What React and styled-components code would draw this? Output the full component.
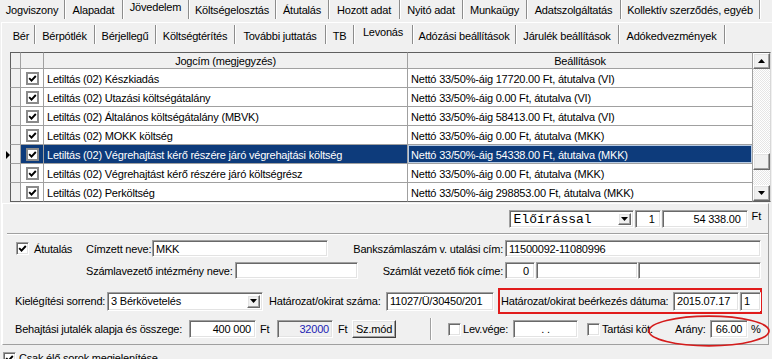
import React from "react";
import styled, { createGlobalStyle } from "styled-components";

const GlobalStyle = createGlobalStyle`
  html, body { margin: 0; padding: 0; background: #f0f0f0; }
  body {
    font-family: "Liberation Sans", Arial, sans-serif;
    font-size: 11px;
    letter-spacing: -0.2px;
    color: #000;
  }
  * { box-sizing: border-box; }
`;

const Window = styled.div`
  width: 772px;
  height: 359px;
  overflow: hidden;
  background: #f0f0f0;
`;

const TabStrip = styled.div`
  display: flex;
  height: 19px;
  padding-left: ${({ $pl }) => $pl || 0}px;
`;

const Tab = styled.div`
  flex: none;
  width: ${({ $w }) => $w}px;
  height: 19px;
  display: flex;
  align-items: center;
  justify-content: center;
  white-space: nowrap;
  padding-bottom: ${({ $active }) => ($active ? 6 : 0)}px;
  padding-top: ${({ $low }) => ($low ? 2 : 0)}px;
  border-right: 1px solid #8c8c8c;
  box-shadow: 1px 0 0 #fff;
`;

const SubPage = styled.div`
  margin-top: 3px;
  margin-left: 1px;
  border-top: 1px solid #fff;
  border-left: 1px solid #fff;
  padding-top: 2px;
`;

const Content = styled.div`
  padding-top: 8px;
`;

/* ---------- grid ---------- */

const GridWrap = styled.div`
  display: flex;
  height: 150px;
`;

const Table = styled.div`
  display: flex;
  flex-direction: column;
`;

const GridLine = styled.div`
  display: grid;
  grid-template-columns: 8px 11px 23px 364px 345px;
  height: ${({ $head }) => ($head ? 17 : 19)}px;
`;

const Gutter = styled.div`
  display: flex;
  align-items: center;
  justify-content: flex-end;
`;

const Pointer = styled.span`
  width: 0;
  height: 0;
  border-left: 4px solid #000;
  border-top: 4px solid transparent;
  border-bottom: 4px solid transparent;
`;

const Cell = styled.div`
  display: flex;
  align-items: center;
  justify-content: ${({ $center }) => ($center ? "center" : "flex-start")};
  padding: ${({ $head }) => ($head ? "0 3px" : "1px 3px 0")};
  white-space: nowrap;
  overflow: hidden;
  background: ${({ $sel, $fixed, $head }) =>
    $sel ? "#0d3b7b" : $fixed || $head ? "#f0f0f0" : "#fff"};
  color: ${({ $sel }) => ($sel ? "#fff" : "#000")};
  border-right: 1px solid #a0a0a0;
  border-bottom: 1px solid ${({ $last }) => ($last ? "#5f5f5f" : "#a0a0a0")};
  border-top: ${({ $head }) => ($head ? "1px solid #5f5f5f" : "none")};
  border-left: ${({ $fixed }) => ($fixed ? "1px solid #5f5f5f" : "none")};
  box-shadow: ${({ $focus }) => ($focus ? "inset 0 0 0 1px #b7cbe4" : "none")};
`;

const ScrollBar = styled.div`
  width: 18px;
  height: 150px;
  display: flex;
  flex-direction: column;
  border-top: 1px solid #5f5f5f;
  border-bottom: 1px solid #5f5f5f;
  border-right: 1px solid #d8d8d8;
`;

const Raised = styled.div`
  background: #f0f0f0;
  border: 1px solid;
  border-color: #fff #696969 #696969 #fff;
  box-shadow: inset -1px -1px #a0a0a0, inset 1px 1px #e3e3e3;
  display: flex;
  align-items: center;
  justify-content: center;
`;

const ScrollBtn = styled(Raised)`
  height: 16px;
  flex: none;
`;

const Track = styled.div`
  flex: 1;
  background: repeating-conic-gradient(#fff 0 25%, #e6e6e6 0 50%) 0 0 / 2px 2px;
`;

const Thumb = styled(Raised)`
  height: 17px;
`;

const Arrow = ({ up }) => (
  <svg width="7" height="4" viewBox="0 0 7 4">
    <polygon points={up ? "0,4 7,4 3.5,0" : "0,0 7,0 3.5,4"} fill="#000" />
  </svg>
);

/* ---------- controls ---------- */

const Box = styled.span`
  flex: none;
  width: 13px;
  height: 13px;
  display: inline-flex;
  align-items: center;
  justify-content: center;
  background: #fff;
  margin-left: ${({ $ml }) => $ml || 0}px;
  ${({ $flat }) =>
    $flat
      ? "border: 2px solid #8a8a8a;"
      : `border: 1px solid; border-color: #a0a0a0 #fff #fff #a0a0a0;
         box-shadow: inset 1px 1px #696969, inset -1px -1px #e3e3e3;`}
`;

const CheckBox = ({ checked, flat, ml }) => (
  <Box $flat={flat} $ml={ml}>
    {checked && (
      <svg width="9" height="9" viewBox="0 0 9 9">
        <path d="M1.2 4.2 L3.5 6.6 L7.8 2" stroke="#000" strokeWidth="1.9" fill="none" />
      </svg>
    )}
  </Box>
);

const Label = styled.span`
  flex: none;
  width: ${({ $w }) => ($w ? `${$w}px` : "auto")};
  margin-left: ${({ $ml }) => $ml || 0}px;
  text-align: ${({ $align }) => $align || "left"};
  padding-right: ${({ $align }) => ($align === "right" ? 2 : 0)}px;
  white-space: nowrap;
`;

const Field = styled.div`
  flex: none;
  width: ${({ $w }) => $w}px;
  height: ${({ $h }) => $h || 17}px;
  margin-left: ${({ $ml }) => $ml || 0}px;
  display: flex;
  align-items: center;
  justify-content: ${({ $align }) =>
    $align === "right" ? "flex-end" : $align === "center" ? "center" : "flex-start"};
  padding: 0 ${({ $pr }) => ($pr !== undefined ? $pr : 3)}px 0 3px;
  background: ${({ $ro }) => ($ro ? "#f0f0f0" : "#fff")};
  color: ${({ $color }) => $color || "#000"};
  white-space: nowrap;
  overflow: hidden;
  border: 1px solid;
  border-color: #a0a0a0 #fff #fff #a0a0a0;
  box-shadow: inset 1px 1px #696969, inset -1px -1px #e3e3e3;
`;

const ComboBox = styled(Field)`
  padding: 2px;
  justify-content: space-between;
`;

const ComboText = styled.span`
  padding-left: ${({ $mono }) => ($mono ? 2 : 1)}px;
  font-family: ${({ $mono }) =>
    $mono ? `"Liberation Mono", "Courier New", monospace` : "inherit"};
  font-size: ${({ $mono }) => ($mono ? 13 : 11)}px;
  letter-spacing: ${({ $mono }) => ($mono ? 0 : -0.2)}px;
`;

const DropBtn = styled(Raised)`
  width: 13px;
  height: 100%;
`;

const Combo = ({ w, h, mono, children }) => (
  <ComboBox $w={w} $h={h}>
    <ComboText $mono={mono}>{children}</ComboText>
    <DropBtn>
      <Arrow />
    </DropBtn>
  </ComboBox>
);

const Button = styled(Raised)`
  flex: none;
  width: ${({ $w }) => $w}px;
  height: 18px;
  border-color: #fff #404040 #404040 #fff;
`;

/* ---------- detail panel ---------- */

const Detail = styled.div`
  margin-top: 1px;
  width: 767px;
  height: 142px;
  border: 1px solid;
  border-color: #fff #a0a0a0 #a0a0a0 #fff;
`;

const TopRow = styled.div`
  height: 29px;
  padding: 6px 7px 0 0;
  display: flex;
  justify-content: flex-end;
  align-items: flex-start;
`;

const Etched = styled.div`
  margin-left: 4px;
  border-top: 1px solid #a0a0a0;
  border-bottom: 1px solid #fff;
`;

const FormRow = styled.div`
  display: flex;
  align-items: center;
  height: ${({ $h }) => $h}px;
  margin-top: ${({ $mt }) => $mt}px;
  padding-left: 12px;
`;

const CheckField = styled.label`
  flex: none;
  width: ${({ $w }) => $w}px;
  display: flex;
  align-items: center;
  gap: 5px;
  padding-left: 1px;
`;

const RedBox = styled.div`
  flex: none;
  margin-left: ${({ $ml }) => $ml}px;
  width: ${({ $w }) => $w}px;
  height: 26px;
  border: 2px solid #e01b1b;
  display: flex;
  align-items: center;
  padding-left: 1px;
`;

const VDivider = styled.div`
  flex: none;
  margin-left: ${({ $ml }) => $ml}px;
  width: 2px;
  height: 22px;
  border-left: 1px solid #a0a0a0;
  border-right: 1px solid #fff;
`;

const RatioGroup = styled.div`
  position: relative;
  flex: none;
  display: flex;
  align-items: center;
  margin-left: ${({ $ml }) => $ml}px;
`;

const Ring = styled.svg`
  position: absolute;
  left: -27px;
  top: -5px;
  pointer-events: none;
  overflow: visible;
`;

const Footer = styled.div`
  padding: 7px 0 0 3px;
  display: flex;
  align-items: flex-start;
  gap: 3px;
  height: 20px;
`;

const mainTabs = [
  ["Jogviszony", 65],
  ["Alapadat", 58],
  ["Jövedelem", 66],
  ["Költségelosztás", 87],
  ["Átutalás", 53],
  ["Hozott adat", 71],
  ["Nyitó adat", 63],
  ["Munkaügy", 64],
  ["Adatszolgáltatás", 94],
  ["Kollektív szerződés, egyéb", 139],
];

const subTabs = [
  ["Bér", 27],
  ["Bérpótlék", 60],
  ["Bérjellegű", 61],
  ["Költségtérítés", 79],
  ["További juttatás", 91],
  ["TB", 28],
  ["Levonás", 59],
  ["Adózási beállítások", 103],
  ["Járulék beállítások", 103],
  ["Adókedvezmények", 106],
];

const rows = [
  ["Letiltás (02) Készkiadás", "Nettó 33/50%-áig 17720.00 Ft, átutalva (VI)"],
  ["Letiltás (02) Utazási költségátalány", "Nettó 33/50%-áig 0.00 Ft, átutalva (VI)"],
  ["Letiltás (02) Általános költségátalány (MBVK)", "Nettó 33/50%-áig 58413.00 Ft, átutalva (VI)"],
  ["Letiltás (02) MOKK költség", "Nettó 33/50%-áig 0.00 Ft, átutalva (MKK)"],
  ["Letiltás (02) Végrehajtást kérő részére járó végrehajtási költség", "Nettó 33/50%-áig 54338.00 Ft, átutalva (MKK)"],
  ["Letiltás (02) Végrehajtást kérő részére járó költségrész", "Nettó 33/50%-áig 0.00 Ft, átutalva (MKK)"],
  ["Letiltás (02) Perköltség", "Nettó 33/50%-áig 298853.00 Ft, átutalva (MKK)"],
];

const selectedRow = 4;

export default function App() {
  return (
    <>
      <GlobalStyle />
      <Window>
        <TabStrip>
          {mainTabs.map(([t, w]) => (
            <Tab key={t} $w={w} $active={t === "Jövedelem"}>
              {t}
            </Tab>
          ))}
        </TabStrip>

        <SubPage>
          <TabStrip $pl={6}>
            {subTabs.map(([t, w]) => (
              <Tab key={t} $w={w} $low={t !== "Levonás"} $active={t === "Levonás"}>
                {t}
              </Tab>
            ))}
          </TabStrip>

          <Content>
            <GridWrap>
              <Table>
                <GridLine $head>
                  <Gutter />
                  <Cell $head $fixed />
                  <Cell $head />
                  <Cell $head $center>Jogcím (megjegyzés)</Cell>
                  <Cell $head $center>Beállítások</Cell>
                </GridLine>
                {rows.map(([name, setting], i) => {
                  const sel = i === selectedRow;
                  const last = i === rows.length - 1;
                  return (
                    <GridLine key={name}>
                      <Gutter>{sel && <Pointer />}</Gutter>
                      <Cell $fixed $last={last} />
                      <Cell $center $sel={sel} $last={last}>
                        <CheckBox checked flat />
                      </Cell>
                      <Cell $sel={sel} $last={last}>{name}</Cell>
                      <Cell $sel={sel} $focus={sel} $last={last}>{setting}</Cell>
                    </GridLine>
                  );
                })}
              </Table>
              <ScrollBar>
                <ScrollBtn>
                  <Arrow up />
                </ScrollBtn>
                <Track>
                  <Thumb style={{ marginTop: 84 }} />
                </Track>
                <ScrollBtn>
                  <Arrow />
                </ScrollBtn>
              </ScrollBar>
            </GridWrap>

            <Detail>
              <TopRow>
                <Combo w={125} h={18} mono>
                  Előírással
                </Combo>
                <Field $w={26} $h={18} $ml={1} $align="right" $pr={5}>1</Field>
                <Field $w={86} $h={18} $ml={1} $align="right" $pr={6}>54 338.00</Field>
                <Label $ml={4}>Ft</Label>
              </TopRow>
              <Etched />

              <FormRow $h={17} $mt={5}>
                <CheckField $w={71}>
                  <CheckBox checked />
                  Átutalás
                </CheckField>
                <Label $w={66}>Címzett neve:</Label>
                <Field $w={176}>MKK</Field>
                <Label $w={177} $align="right">Bankszámlaszám v. utalási cím:</Label>
                <Field $w={256}>11500092-11080996</Field>
              </FormRow>

              <FormRow $h={17} $mt={5}>
                <Label $w={71} />
                <Label $w={149}>Számlavezető intézmény neve:</Label>
                <Field $w={123} />
                <Label $w={147} $align="right">Számlát vezető fiók címe:</Label>
                <Field $w={30} $align="right" $pr={5}>0</Field>
                <Field $w={102} $ml={1} />
                <Field $w={123} />
              </FormRow>

              <FormRow $h={26} $mt={9}>
                <Label $w={92}>Kielégítési sorrend:</Label>
                <Combo w={156} h={19}>
                  3 Bérkövetelés
                </Combo>
                <Label $w={117} $ml={6}>Határozat/okirat száma:</Label>
                <Field $w={108} $h={19} $pr={0}>11027/Ü/30450/201</Field>
                <RedBox $ml={4} $w={264}>
                  <Label $w={172}>Határozat/okirat beérkezés dátuma:</Label>
                  <Field $w={66} $h={19}>2015.07.17</Field>
                  <Field $w={21} $h={19} $ml={1}>1</Field>
                </RedBox>
              </FormRow>

              <FormRow $h={18} $mt={6}>
                <Label $w={174}>Behajtási jutalék alapja és összege:</Label>
                <Field $w={67} $h={18} $align="right" $pr={4}>400 000</Field>
                <Label $w={17} $ml={4}>Ft</Label>
                <Field $w={56} $h={18} $align="right" $ro $color="#1c1cb4">32000</Field>
                <Label $w={14} $ml={5}>Ft</Label>
                <Button $w={44}>Sz.mód</Button>
                <VDivider $ml={34} />
                <CheckBox ml={16} />
                <Label $w={50} $ml={2}>Lev.vége:</Label>
                <Field $w={65} $h={18} $align="center">. .</Field>
                <CheckBox ml={9} />
                <Label $w={60} $ml={2}>Tartási köt.</Label>
                <RatioGroup $ml={13}>
                  <Label $w={35}>Arány:</Label>
                  <Field $w={38} $h={18} $align="center">66.00</Field>
                  <Label $ml={3}>%</Label>
                  <Ring width="122" height="32" viewBox="0 0 122 32">
                    <ellipse cx="61" cy="16" rx="60" ry="14.8" fill="none" stroke="#d41c1c" strokeWidth="1.7" />
                  </Ring>
                </RatioGroup>
              </FormRow>
            </Detail>
          </Content>
        </SubPage>

        <Footer>
          <CheckBox checked />
          <Label>Csak élő sorok megjelenítése</Label>
        </Footer>
      </Window>
    </>
  );
}
